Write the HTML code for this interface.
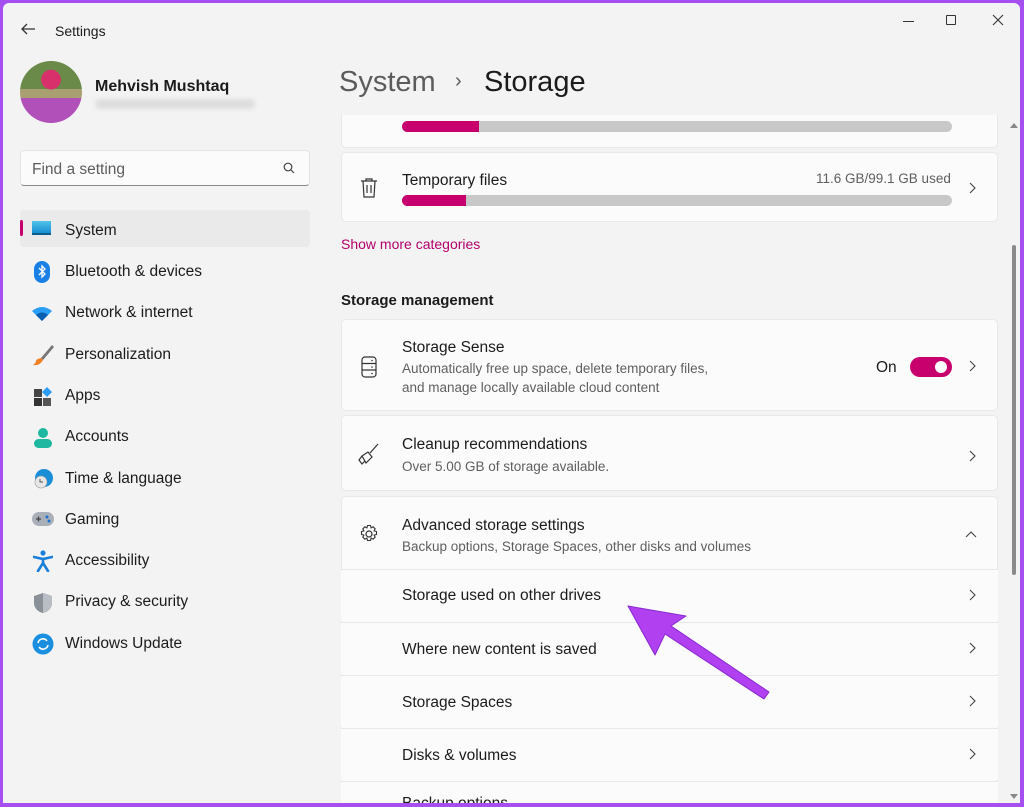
<!DOCTYPE html>
<html><head><meta charset="utf-8"><style>
*{margin:0;padding:0;box-sizing:border-box}
body{width:1024px;height:807px;overflow:hidden;background:#a64ff0;font-family:"Liberation Sans",sans-serif;color:#1b1b1b;position:relative}
.win{position:absolute;left:3px;top:3px;width:1017px;height:800px;background:#f3f3f3;border-radius:6px 6px 0 0;overflow:hidden}
.a{position:absolute}
.t{position:absolute;font-size:15px;white-space:nowrap}
.nav{position:absolute;left:62px;font-size:15.5px;color:#1b1b1b}
.card{position:absolute;left:338px;width:657px;background:#fbfbfb;border:1px solid #e8e8e8;border-radius:5px}
.bar{position:absolute;height:11px;border-radius:6px;background:#c8c8c8;overflow:hidden}
.bar i{position:absolute;left:0;top:0;bottom:0;background:#c8006e}
.sub{color:#5f5f5f;font-size:13.5px}
.chev{position:absolute;left:963px;width:12px;height:14px}
.row{position:absolute;left:338px;width:657px;height:52px;background:#fbfbfb;border-top:1px solid #e8e8e8}
</style></head><body>
<div class="win">
<svg class="a" style="left:17px;top:19px" width="16" height="14"><path d="M15 7H2M7 2L2 7l5 5" stroke="#333" stroke-width="1.3" fill="none"/></svg>
<div class="t" style="left:52px;top:20px;font-size:14px">Settings</div>
<div class="a" style="left:900px;top:18px;width:11px;height:1px;background:#333"></div>
<div class="a" style="left:943px;top:12px;width:10px;height:10px;border:1px solid #333;border-radius:1px"></div>
<svg class="a" style="left:989px;top:11px" width="12" height="12"><path d="M1 1l10 10M11 1L1 11" stroke="#333" stroke-width="1.1"/></svg>
<div class="a" style="left:17px;top:58px;width:62px;height:62px;border-radius:50%;background:radial-gradient(circle at 50% 30%,#d8306a 0 18%,transparent 19%),linear-gradient(#6a8a4a 0 45%,#a8a070 45% 60%,#b050b8 60%)"></div>
<div class="t" style="left:92px;top:75px;font-size:16px;font-weight:bold">Mehvish Mushtaq</div>
<div class="a" style="left:92px;top:96px;width:160px;height:10px;border-radius:5px;background:#ddd;filter:blur(2px)"></div>
<div class="a" style="left:17px;top:147px;width:290px;height:36px;background:#fbfbfb;border:1px solid #e4e4e4;border-bottom:1px solid #8a8a8a;border-radius:4px"></div>
<div class="t" style="left:29px;top:158px;font-size:15.5px;color:#5d5d5d">Find a setting</div>
<svg class="a" style="left:280px;top:159px" width="12" height="12"><circle cx="5" cy="5" r="3.8" stroke="#444" stroke-width="1.2" fill="none"/><path d="M8 8l3 3" stroke="#444" stroke-width="1.2"/></svg>
<div class="a" style="left:17px;top:207px;width:290px;height:37px;background:#eaeaea;border-radius:4px"></div>
<div class="a" style="left:17px;top:217px;width:3px;height:16px;background:#c8006e;border-radius:2px"></div>
<div class="a" style="left:29px;top:218px;width:19px;height:14px;background:linear-gradient(#4fc3ea,#1a8fd0);border-bottom:2px solid #0f5d8a"></div>
<div class="nav" style="top:219px">System</div>
<svg class="a" style="left:31px;top:258px" width="16" height="22"><rect x="0" y="0" width="16" height="22" rx="8" fill="#1a80e6"/><path d="M5 7l6 6-3 3V5l3 3-6 6" stroke="#fff" stroke-width="1.3" fill="none"/></svg>
<div class="nav" style="top:260px">Bluetooth &amp; devices</div>
<svg class="a" style="left:28px;top:303px" width="22" height="16"><path d="M1 5Q11-3 21 5L11 15Z" fill="#2a9df4"/><path d="M5 9Q11 4 17 9L11 15Z" fill="#0a5fb0"/></svg>
<div class="nav" style="top:301px">Network &amp; internet</div>
<svg class="a" style="left:29px;top:341px" width="22" height="22"><path d="M20 1L9 14l2 2L22 3Z" fill="#777"/><path d="M9 14l2 2q-3 6-10 5 3-2 3-4t5-3z" fill="#f08020"/></svg>
<div class="nav" style="top:343px">Personalization</div>
<svg class="a" style="left:29px;top:383px" width="22" height="22"><rect x="2" y="3" width="8" height="8" fill="#444"/><rect x="2" y="12" width="8" height="8" fill="#333"/><rect x="11" y="12" width="8" height="8" fill="#555"/><path d="M15 1l5 5-5 5-5-5z" fill="#2a9df4"/></svg>
<div class="nav" style="top:384px">Apps</div>
<svg class="a" style="left:30px;top:424px" width="20" height="22"><circle cx="10" cy="6" r="5" fill="#1eb8a0"/><rect x="1" y="12" width="18" height="9" rx="4.5" fill="#1eb8a0"/></svg>
<div class="nav" style="top:425px">Accounts</div>
<svg class="a" style="left:29px;top:465px" width="22" height="22"><circle cx="12" cy="10" r="9" fill="#1a8fd8"/><circle cx="9" cy="14" r="6" fill="#e8e8e8" stroke="#999" stroke-width=".6"/><path d="M8 11v3h3" stroke="#555" fill="none"/></svg>
<div class="nav" style="top:467px">Time &amp; language</div>
<svg class="a" style="left:29px;top:509px" width="22" height="14"><rect x="0" y="0" width="22" height="14" rx="7" fill="#aab0b8"/><path d="M4 7h5M6.5 4.5v5" stroke="#444" stroke-width="1.3"/><circle cx="15" cy="5" r="1.5" fill="#1a6fd0"/><circle cx="17" cy="9" r="1.5" fill="#1a6fd0"/></svg>
<div class="nav" style="top:508px">Gaming</div>
<svg class="a" style="left:30px;top:547px" width="20" height="22"><circle cx="10" cy="3" r="2.6" fill="#1a7fd8"/><path d="M1 7l9 2 9-2M10 9v4l-5 8M10 13l5 8" stroke="#1a7fd8" stroke-width="2.6" fill="none" stroke-linecap="round"/></svg>
<div class="nav" style="top:549px">Accessibility</div>
<svg class="a" style="left:30px;top:589px" width="20" height="22"><path d="M10 1l9 3v7c0 5-4 9-9 10C5 20 1 16 1 11V4z" fill="#8a9098"/><path d="M10 1l9 3v7c0 5-4 9-9 10z" fill="#b8bec4"/></svg>
<div class="nav" style="top:590px">Privacy &amp; security</div>
<svg class="a" style="left:29px;top:630px" width="22" height="22"><circle cx="11" cy="11" r="10.5" fill="#1a8fe0"/><path d="M6 10a5 5 0 0 1 9-2M16 12a5 5 0 0 1-9 2" stroke="#fff" stroke-width="1.6" fill="none"/></svg>
<div class="nav" style="top:632px">Windows Update</div>
<div class="t" style="left:336px;top:63px;font-size:29px;color:#5c5c5c">System</div>
<div class="t" style="left:452px;top:67px;font-size:20px;color:#5c5c5c">›</div>
<div class="t" style="left:481px;top:63px;font-size:29px;color:#1b1b1b">Storage</div>
<div class="a" style="left:0;top:112px;width:1017px;height:688px;overflow:hidden">
 <div style="position:absolute;left:0;top:-112px;width:1017px;height:800px">
  <div class="card" style="top:90px;height:55px"></div>
  <div class="bar" style="left:399px;top:118px;width:550px"><i style="width:77px"></i></div>
  <div class="card" style="top:149px;height:70px"></div>
  <svg class="a" style="left:357px;top:175px" width="18" height="20"><path d="M1 3h16M6 3V1h6v2M3 3l1 16h10l1-16M7 7v8M11 7v8" stroke="#333" stroke-width="1.2" fill="none"/></svg>
  <div class="t" style="left:399px;top:169px;font-size:15.5px">Temporary files</div>
  <div class="t sub" style="left:813px;top:168px">11.6 GB/99.1 GB used</div>
  <svg class="chev" style="top:178px"><path d="M4 2l5 5-5 5" stroke="#444" stroke-width="1.1" fill="none"/></svg>
  <div class="bar" style="left:399px;top:192px;width:550px"><i style="width:64px"></i></div>
  <div class="t" style="left:338px;top:233px;font-size:14px;color:#b4006a">Show more categories</div>
  <div class="t" style="left:338px;top:289px;font-size:15px;font-weight:bold">Storage management</div>
  <div class="card" style="top:316px;height:92px"></div>
  <svg class="a" style="left:358px;top:353px" width="16" height="22"><rect x="1" y="1" width="14" height="20" rx="3" stroke="#333" stroke-width="1.2" fill="none"/><path d="M1 7.5h14M1 14h14" stroke="#333" stroke-width="1.2"/><circle cx="11" cy="4.5" r=".8" fill="#333"/><circle cx="11" cy="11" r=".8" fill="#333"/><circle cx="11" cy="17.5" r=".8" fill="#333"/></svg>
  <div class="t" style="left:399px;top:336px;font-size:15.5px">Storage Sense</div>
  <div class="t sub" style="left:399px;top:358px">Automatically free up space, delete temporary files,</div>
  <div class="t sub" style="left:399px;top:377px">and manage locally available cloud content</div>
  <div class="t" style="left:873px;top:356px;font-size:15.5px">On</div>
  <div class="a" style="left:907px;top:354px;width:42px;height:20px;border-radius:10px;background:#c8006e"></div>
  <div class="a" style="left:932px;top:358px;width:12px;height:12px;border-radius:50%;background:#fff"></div>
  <svg class="chev" style="top:356px"><path d="M4 2l5 5-5 5" stroke="#444" stroke-width="1.1" fill="none"/></svg>
  <div class="card" style="top:412px;height:76px"></div>
  <svg class="a" style="left:355px;top:440px" width="22" height="24"><path d="M20 1l-8 9M4 13l6-4 4 5-6 6zM7 18l-3 3-3-4 3-4" stroke="#333" stroke-width="1.2" fill="none"/></svg>
  <div class="t" style="left:399px;top:433px;font-size:15.5px">Cleanup recommendations</div>
  <div class="t sub" style="left:399px;top:456px">Over 5.00 GB of storage available.</div>
  <svg class="chev" style="top:446px"><path d="M4 2l5 5-5 5" stroke="#444" stroke-width="1.1" fill="none"/></svg>
  <div class="card" style="top:493px;height:305px"></div>
  <svg class="a" style="left:356px;top:521px" width="20" height="20" viewBox="0 0 20 20"><circle cx="10" cy="10" r="3" stroke="#333" stroke-width="1.2" fill="none"/><path d="M8.5 1.5h3l.6 2.4 2-1.1 2.1 2.1-1.1 2 2.4.6v3l-2.4.6 1.1 2-2.1 2.1-2-1.1-.6 2.4h-3l-.6-2.4-2 1.1-2.1-2.1 1.1-2-2.4-.6v-3l2.4-.6-1.1-2 2.1-2.1 2 1.1z" stroke="#333" stroke-width="1.1" fill="none"/></svg>
  <div class="t" style="left:399px;top:514px;font-size:15.5px">Advanced storage settings</div>
  <div class="t sub" style="left:399px;top:536px">Backup options, Storage Spaces, other disks and volumes</div>
  <svg class="a" style="left:961px;top:526px" width="14" height="10"><path d="M2 8l5-5 5 5" stroke="#444" stroke-width="1.1" fill="none"/></svg>
  <div class="row" style="top:566px"></div>
  <div class="t" style="left:399px;top:584px;font-size:15.5px">Storage used on other drives</div>
  <svg class="chev" style="top:585px"><path d="M4 2l5 5-5 5" stroke="#444" stroke-width="1.1" fill="none"/></svg>
  <div class="row" style="top:619px"></div>
  <div class="t" style="left:399px;top:638px;font-size:15.5px">Where new content is saved</div>
  <svg class="chev" style="top:638px"><path d="M4 2l5 5-5 5" stroke="#444" stroke-width="1.1" fill="none"/></svg>
  <div class="row" style="top:672px"></div>
  <div class="t" style="left:399px;top:691px;font-size:15.5px">Storage Spaces</div>
  <svg class="chev" style="top:691px"><path d="M4 2l5 5-5 5" stroke="#444" stroke-width="1.1" fill="none"/></svg>
  <div class="row" style="top:725px"></div>
  <div class="t" style="left:399px;top:744px;font-size:15.5px">Disks &amp; volumes</div>
  <svg class="chev" style="top:744px"><path d="M4 2l5 5-5 5" stroke="#444" stroke-width="1.1" fill="none"/></svg>
  <div class="row" style="top:778px;height:22px"></div>
  <div class="t" style="left:399px;top:792px;font-size:15.5px">Backup options</div>
 </div>
</div>
<svg class="a" style="left:1007px;top:118px" width="8" height="8"><path d="M0 7L4 2l4 5z" fill="#888"/></svg>
<div class="a" style="left:1009px;top:242px;width:4px;height:330px;border-radius:2px;background:#8a8a8a"></div>
<svg class="a" style="left:1007px;top:790px" width="8" height="8"><path d="M0 1L4 6l4-5z" fill="#888"/></svg>
<svg class="a" style="left:0;top:0" width="1017" height="800"><path d="M625 603L683 613 668 623 766 689 761 696 662 631 652 652Z" fill="#b040f0" stroke="#8a2ad0" stroke-width="1" stroke-linejoin="round"/></svg>
</div>
</body></html>
